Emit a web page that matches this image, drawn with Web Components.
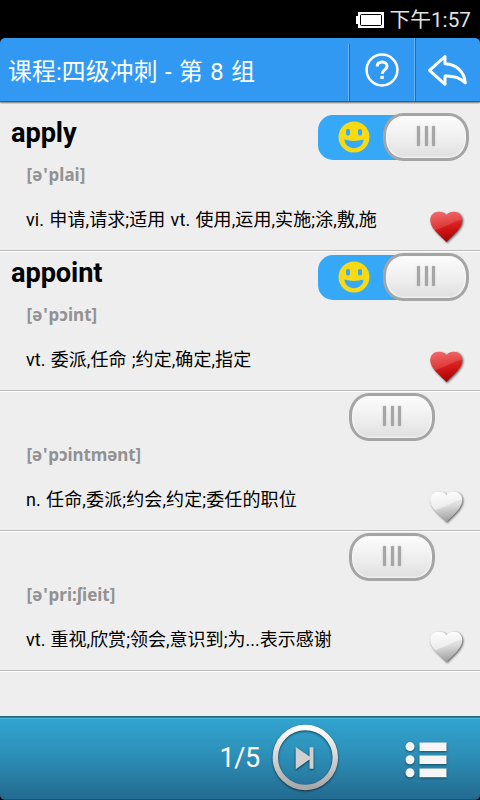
<!DOCTYPE html>
<html lang="zh-CN">
<head>
<meta charset="utf-8">
<title>课程:四级冲刺</title>
<style>
html,body{margin:0;height:100%;background:#000}
body{font-family:Roboto,"Noto Sans CJK SC",sans-serif;overflow:hidden}
</style>
</head>
<body>
<vocab-app></vocab-app>
<script>
class Base extends HTMLElement{
  connectedCallback(){
    if(this.shadowRoot)return;
    this.attachShadow({mode:'open'}).innerHTML=this.render();
  }
  a(n){return this.getAttribute(n)||''}
}

class StatusBar extends Base{
  render(){return `<style>
  :host{display:flex;height:38px;background:#000;color:#e2e2e2;align-items:center;justify-content:flex-end;padding-right:9px;box-sizing:border-box}
  svg{display:block;margin:2px 5px 0 0}
  span{font-size:20.7px;line-height:41px;white-space:nowrap;letter-spacing:.05px;height:38px}
  </style>
  <svg width="28" height="16" viewBox="0 0 28 16"><path d="M2 0H28V16H2V12H0V4H2Z" fill="#fff"/><rect x="4.5" y="2.5" width="21" height="11" rx="1" fill="#fff" stroke="#000"/></svg>
  <span><slot></slot></span>`}
}

class TitleBar extends Base{
  render(){return `<style>
  :host{display:flex;height:66px;background:linear-gradient(#000 50%,#eee 50%)}
  .wrap{flex:1;display:flex;height:64px;box-sizing:border-box;background:#3199f1;border-bottom:1px solid #1966b8;border-radius:5px 5px 0 0;box-shadow:0 1px 2px #0008;color:#fff}
  h1{flex:1;margin:0;padding-left:8px;font-size:23.8px;font-weight:400;line-height:68px;white-space:nowrap;letter-spacing:.15px;word-spacing:1.3px}
  .b{width:66px;box-sizing:border-box;display:flex;align-items:center;justify-content:center;border-left:1px solid #68b6f7;box-shadow:inset 1px 0 #1b6db8;padding-top:1px}
  .b.q{height:57px;margin-top:6px;padding:0 0 6px}
  svg{display:block}
  </style>
  <div class="wrap"><h1><slot></slot></h1>
  <div class="b q"><svg width="34" height="34" viewBox="0 0 34 34" fill="none" stroke="#fff"><circle cx="17" cy="17" r="15.4" stroke-width="2.5"/><path d="M12.2 13.5C12.2 10.5 14.2 9 17 9C20 9 22 10.7 22 13.3C22 17 17.1 16.8 17.1 21" stroke-width="3"/><path d="M17.1 22.8V26" stroke-width="3.4"/></svg></div>
  <div class="b"><svg width="40" height="34" viewBox="0 0 40 34"><path d="M1.5 17.3L17 3.5V10.8C28.5 11.6 36.3 18.5 37.3 29.8C31.5 24.2 25.5 22.6 17 23V31.3Z" fill="none" stroke="#fff" stroke-width="3" stroke-linejoin="round"/></svg></div></div>`}
}

class SlideSwitch extends Base{
  render(){return `<style>
  :host{display:flex;height:48px;box-sizing:border-box;align-items:center;justify-content:flex-end}
  .track{width:92px;height:45px;margin-right:-27px;border-radius:15px 0 0 15px;background:#35a9f7;display:none;align-items:center;box-sizing:border-box;padding-left:19.5px}
  :host([on]) .track{display:flex}
  .thumb{position:relative;width:86px;height:48px;box-sizing:border-box;border:3px solid #a5a5a5;border-radius:20px/22px;background:linear-gradient(#fcfcfc,#ededed 60%,#dedede);box-shadow:inset 0 0 2px 1px #f9f9f9;display:flex;align-items:center;justify-content:center;gap:4.5px}
  i{width:3px;height:20px;background:#a6a6a6;box-shadow:0 0 1.5px #aaa;border-radius:1px;margin-top:-2px}
  svg{display:block}
  </style>
  <div class="track"><svg width="32" height="32" viewBox="0 0 32 32"><circle cx="16" cy="16" r="15.5" fill="#f8da14"/><rect x="8" y="8" width="4" height="6.4" rx="1.6" fill="#35a9f7"/><rect x="20" y="8" width="4" height="6.4" rx="1.6" fill="#35a9f7"/><path d="M6.4 18.6Q16 21.2 25.6 18.6C25 24 21 27.3 16 27.3S7 24 6.4 18.6Z" fill="#35a9f7"/></svg></div>
  <div class="thumb"><i></i><i></i><i></i></div>`}
}

class HeartMark extends Base{
  render(){
    const on=this.hasAttribute('on');
    const c=on?['#f35555','#d91c1c','#a40000']:['#ffffff','#dcdcdc','#999999'];
    return `<style>:host{display:block}svg{display:block;overflow:visible;filter:drop-shadow(1px 1px 1px #0009)}</style>
  <svg width="34" height="33" viewBox="0 0 34 33"><defs><linearGradient id="g" x1="0" y1="0" x2=".12" y2="1"><stop stop-color="${c[0]}"/><stop offset=".5" stop-color="${c[1]}"/><stop offset="1" stop-color="${c[2]}"/></linearGradient><clipPath id="c"><path d="M16.5 31.3C13.5 27 .3 18.5 .3 9C.5 3.8 4.2 .8 8.3 .8C12 .8 15 1.6 16.5 4.2C18 1.6 21 .8 24 .8C28.6 .8 32.2 4 32.3 9C32.3 18.5 19.3 27 16.5 31.3Z"/></clipPath></defs>
  <g clip-path="url(#c)"><rect width="34" height="33" fill="url(#g)"/><path d="M0 0H34V8C23 10 15 17 3 19.5L0 18Z" fill="#fff" fill-opacity="${on?.14:.5}"/></g></svg>`}
}

class WordRow extends Base{
  render(){
    const on=this.hasAttribute('known');
    return `<style>
  :host{display:flex;flex-direction:column;height:140px;box-sizing:border-box;border-bottom:1px solid #bbb;box-shadow:0 1px #fff;padding-top:2px}
  .top{display:flex;justify-content:space-between;height:48px;padding-right:${on?11:45}px}
  b{font-size:27.2px;line-height:41px;padding-left:11px;color:#000;white-space:nowrap;letter-spacing:-.1px}
  .ph{font:700 17px/24px "Noto Sans",sans-serif;color:#929292;padding-left:26.5px;height:24px;margin-top:2px;white-space:nowrap;letter-spacing:${this.a('ps')||0}px}
  .ph span{margin:0 .9px}
  .bot{display:flex;justify-content:space-between;padding:21px 16px 0 26px}
  p{margin:0;font-size:18px;line-height:23px;color:#000;white-space:nowrap;word-spacing:.6px;letter-spacing:${this.a('ls')||0}px}
  heart-mark{margin-top:3px}
  </style>
  <div class="top"><b>${on?this.a('word'):''}</b><slide-switch ${on?'on':''}></slide-switch></div>
  <div class="ph">${this.a('sound').replace("'","<span>'</span>")}</div>
  <div class="bot"><p><slot></slot></p><heart-mark ${on?'on':''}></heart-mark></div>`}
}

class PlayerBar extends Base{
  render(){return `<style>
  :host{display:flex;height:84px;box-sizing:border-box;border-top:1px solid #23647f;border-bottom:1px solid #1c5475;box-shadow:inset 0 1px #2584aa,inset 0 2px #45b5da;background:linear-gradient(#31a5d0,#2d90b8 45%,#236a90);border-radius:0 0 5px 5px;align-items:center;color:#fff}
  span{margin-left:219.5px;width:49.5px;font-size:27px;line-height:85px;height:84px;white-space:nowrap;letter-spacing:-.4px}
  svg{display:block;overflow:visible}
  .play{margin-left:2px;filter:drop-shadow(0 1px 1px #0009)}
  .list{margin:2px 0 0 64px;filter:drop-shadow(0 1px 1px #0007)}
  </style>
  <span><slot></slot></span>
  <svg class="play" width="68" height="68" viewBox="0 0 68 68"><defs><linearGradient id="r" x1="0" y1="0" x2="0" y2="1"><stop stop-color="#fff"/><stop offset="1" stop-color="#a8a8a8"/></linearGradient></defs><circle cx="34.3" cy="33.5" r="30" fill="none" stroke="url(#r)" stroke-width="5.4"/><path d="M24.7 23L38.5 32.6V23.2H42.5V44.7H38.5V35.4L24.7 45.2Z" fill="#d0d0d0"/></svg>
  <svg class="list" width="44" height="40" viewBox="0 0 44 40"><g fill="#f5f5f5"><circle cx="7" cy="7.6" r="4.5"/><circle cx="7" cy="20.7" r="4.5"/><circle cx="7" cy="33.7" r="4.5"/><path d="M16.5 3.4H43.5V12H16.5ZM16.5 16.6H43.5V25H16.5ZM16.5 29.6H43.5V38.2H16.5Z"/></g></svg>`}
}

class VocabApp extends Base{
  render(){return `<style>
  :host{display:flex;flex-direction:column;width:480px;height:800px;background:#000}
  main{flex:1;background:#eee;padding-top:7px;box-sizing:border-box}
  </style>
  <status-bar>下午1:57</status-bar>
  <title-bar>课程:四级冲刺 - 第 8 组</title-bar>
  <main>
  <word-row known word="apply" sound="[ə'plai]" ls=".1">vi. 申请,请求;适用 vt. 使用,运用,实施;涂,敷,施</word-row>
  <word-row known word="appoint" sound="[ə'pɔint]" ls=".07">vt. 委派,任命 ;约定,确定,指定</word-row>
  <word-row word="appointment" sound="[ə'pɔintmənt]" ps="-.1" ls=".12">n. 任命,委派;约会,约定;委任的职位</word-row>
  <word-row word="appreciate" sound="[ə'pri:ʃieit]" ls=".02">vt. 重视,欣赏;领会,意识到;为...表示感谢</word-row>
  </main>
  <player-bar>1/5</player-bar>`}
}
customElements.define('status-bar',StatusBar);
customElements.define('title-bar',TitleBar);
customElements.define('slide-switch',SlideSwitch);
customElements.define('heart-mark',HeartMark);
customElements.define('word-row',WordRow);
customElements.define('player-bar',PlayerBar);
customElements.define('vocab-app',VocabApp);
</script>
</body>
</html>
